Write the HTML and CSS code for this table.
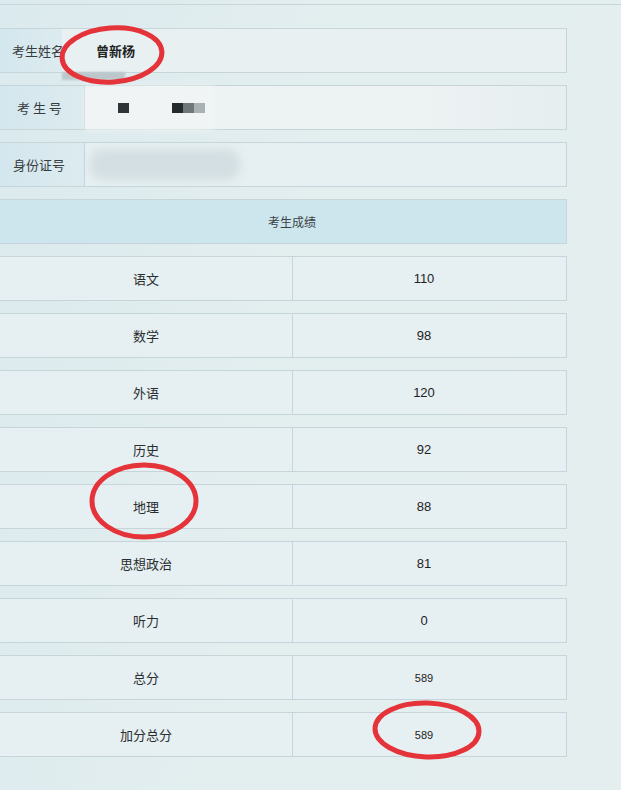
FILE: index.html
```html
<!DOCTYPE html>
<html lang="zh">
<head>
<meta charset="utf-8">
<link rel="stylesheet" href="styles.css">
</head>
<body>
<div class="page">
  <div class="topline"></div>
  <div class="table">
    <div class="row info first">
      <div class="label name-label">考生姓名</div>
      <div class="value name">曾新杨</div>
      <span class="smudge"></span>
    </div>
    <div class="row info">
      <div class="label spaced">考 生 号</div>
      <div class="value masked">
        <span class="blk b1"></span>
        <span class="blk b2"></span><span class="blk b3"></span><span class="blk b4"></span>
      </div>
    </div>
    <div class="row info">
      <div class="label">身份证号</div>
      <div class="value blurred"><span class="blob"></span></div>
    </div>
    <div class="row head">考生成绩</div>
    <div class="row score"><div class="subj">语文</div><div class="num">110</div></div>
    <div class="row score"><div class="subj">数学</div><div class="num">98</div></div>
    <div class="row score"><div class="subj">外语</div><div class="num">120</div></div>
    <div class="row score"><div class="subj">历史</div><div class="num">92</div></div>
    <div class="row score"><div class="subj">地理</div><div class="num">88</div></div>
    <div class="row score"><div class="subj">思想政治</div><div class="num">81</div></div>
    <div class="row score"><div class="subj">听力</div><div class="num">0</div></div>
    <div class="row score"><div class="subj">总分</div><div class="num small">589</div></div>
    <div class="row score"><div class="subj">加分总分</div><div class="num small">589</div></div>
  </div>
  <svg class="marks" width="621" height="790" viewBox="0 0 621 790">
    <ellipse cx="112" cy="55" rx="50" ry="27" transform="rotate(-4 112 55)"/>
    <ellipse cx="144" cy="501" rx="52" ry="36"/>
    <ellipse cx="427" cy="730" rx="52" ry="27" transform="rotate(2 427 730)"/>
  </svg>
</div>
</body>
</html>
```

FILE: styles.css
```css
html, body {
  margin: 0;
  padding: 0;
}
body {
  width: 621px;
  height: 790px;
  overflow: hidden;
  background: linear-gradient(100deg, #dbeaee 0%, #e3eeef 45%, #e4eeee 100%);
  font-family: "Noto Sans CJK SC", "Liberation Sans", sans-serif;
  color: #2f3335;
}
.page {
  position: relative;
  width: 621px;
  height: 790px;
}
.topline {
  height: 4px;
  border-bottom: 1px solid #c9d6d8;
}
.table {
  width: 567px;
  margin-top: 23px;
  display: flex;
  flex-direction: column;
  gap: 12px;
}
.row {
  position: relative;
  height: 45px;
  box-sizing: border-box;
  border: 1px solid #c5d5d9;
  border-left: none;
  display: flex;
  align-items: stretch;
  background: #e6eff1;
  font-size: 13px;
}
.label {
  width: 85px;
  flex: none;
  display: flex;
  align-items: center;
  padding-left: 13px;
  box-sizing: border-box;
  border-right: 1px solid #c5d5d9;
  background: linear-gradient(90deg, #d4e7ee, #dcebef);
  color: #373c3f;
  font-size: 13px;
}
.name-label {
  border-right: none;
  width: 62px;
  padding-left: 12px;
  white-space: nowrap;
}
.spaced {
  padding-left: 17px;
  white-space: pre;
}
.value {
  flex: 1;
  display: flex;
  align-items: center;
}
.name {
  padding-left: 34px;
  font-weight: 700;
  color: #222;
  background: #e8f0f2;
}
.smudge {
  position: absolute;
  left: 62px;
  top: 43px;
  width: 63px;
  height: 8px;
  background: #bcc7cb;
  filter: blur(1px);
}
.masked {
  position: relative;
  background: linear-gradient(90deg, #edf2f3 0%, #edf2f3 70%, #e6eef0 100%);
}
.masked::before {
  content: "";
  position: absolute;
  left: 0;
  top: 0;
  width: 130px;
  height: 44px;
  background: #f0f4f4;
  filter: blur(3px);
}
.blk {
  position: absolute;
  top: 17px;
  height: 10px;
  width: 11px;
}
.b1 { left: 33px; background: #2f3536; }
.b2 { left: 87px; background: #24292a; }
.b3 { left: 98px; background: #6f7779; }
.b4 { left: 109px; background: #a9b1b3; }
.blurred {
  position: relative;
}
.blob {
  position: absolute;
  left: 5px;
  top: 6px;
  width: 150px;
  height: 31px;
  border-radius: 14px;
  background: #d3dfe2;
  filter: blur(4px);
}
.head {
  justify-content: center;
  align-items: center;
  padding-left: 18px;
  background: #cde6ee;
  color: #3b4246;
  font-size: 12px;
}
.subj {
  width: 293px;
  flex: none;
  box-sizing: border-box;
  border-right: 1px solid #c5d5d9;
  display: flex;
  align-items: center;
  justify-content: center;
  color: #2a2e30;
  font-size: 13px;
}
.num {
  flex: 1;
  display: flex;
  align-items: center;
  justify-content: center;
  padding-right: 11px;
  font-family: "Liberation Sans", sans-serif;
  font-size: 13px;
  color: #1f2223;
}
.num.small {
  font-size: 11px;
}
.marks {
  position: absolute;
  left: 0;
  top: 0;
  pointer-events: none;
}
.marks ellipse {
  fill: none;
  stroke: #e5333a;
  stroke-width: 5;
}
```
